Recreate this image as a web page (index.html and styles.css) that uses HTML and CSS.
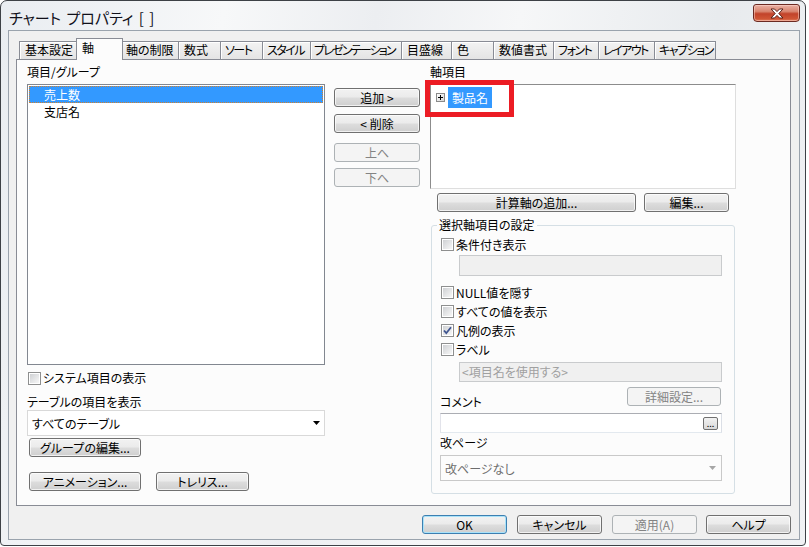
FILE: index.html
```html
<!DOCTYPE html>
<html>

<head>
    <title>チャート プロパティ</title>
    <link rel="stylesheet" href="styles.css">
</head>

<body>
    <div id="window">
        <div id="titlebar">
            <span class="title">チャート プロパティ [ ]</span>
            <span class="close">
                <svg width="14" height="11" viewBox="0 0 14 11">
                    <path d="M1 1 L4.5 1 L7 3.6 L9.5 1 L13 1 L8.8 5.5 L13 10 L9.5 10 L7 7.4 L4.5 10 L1 10 L5.2 5.5 Z" fill="#fff" stroke="#5a2118" stroke-width="1"/>
                </svg>
            </span>
        </div>
        <div id="client">
            <div id="tabs">
                <span class="tab w60">基本設定</span>
                <span class="tab active">軸</span>
                <span class="tab w59">軸の制限</span>
                <span class="tab w43">数式</span>
                <span class="tab kana w43">ソート</span>
                <span class="tab kana w49">スタイル</span>
                <span class="tab kana w92">プレゼンテーション</span>
                <span class="tab w51">目盛線</span>
                <span class="tab w43">色</span>
                <span class="tab w61">数値書式</span>
                <span class="tab kana w46">フォント</span>
                <span class="tab kana w57">レイアウト</span>
                <span class="tab kana w62">キャプション</span>
            </div>
            <div id="panel">
                <div class="col left">
                    <div class="label">項目/グループ</div>
                    <div class="listbox">
                        <div class="item selected">売上数</div>
                        <div class="item">支店名</div>
                    </div>
                    <div class="check"><span class="cb"></span><span class="cb-text">システム項目の表示</span></div>
                    <div class="label2">テーブルの項目を表示</div>
                    <div class="combo">
                        <span>すべてのテーブル</span>
                        <svg width="7" height="4" viewBox="0 0 7 4"><path d="M0 0 H7 L3.5 4 Z" fill="#000"/></svg>
                    </div>
                    <button class="btn group-edit">グループの編集...</button>
                    <div class="btnrow">
                        <button class="btn anim">アニメーション...</button>
                        <button class="btn trellis">トレリス...</button>
                    </div>
                </div>

                <div class="col middle">
                    <button class="btn">追加 &gt;</button>
                    <button class="btn del">&lt; 削除</button>
                    <button class="btn up" disabled>上へ</button>
                    <button class="btn down" disabled>下へ</button>
                </div>

                <div class="col right">
                    <div class="label">軸項目</div>
                    <div class="tree">
                        <div class="node">
                            <span class="plus">
                                <svg width="7" height="7" viewBox="0 0 7 7"><path d="M1 3.5 H6 M3.5 1 V6" stroke="#000" stroke-width="1"/></svg>
                            </span>
                            <span class="node-label">製品名</span>
                        </div>
                    </div>
                    <div class="highlight"></div>
                    <div class="axis-btns">
                        <button class="btn calc">計算軸の追加...</button>
                        <button class="btn edit">編集...</button>
                    </div>
                    <fieldset class="group">
                        <legend>選択軸項目の設定</legend>
                        <div class="group-body">
                            <div class="check row"><span class="cb"></span><span class="cb-text">条件付き表示</span></div>
                            <div class="field"></div>
                            <div class="check row first"><span class="cb"></span><span class="cb-text">NULL値を隠す</span></div>
                            <div class="check row"><span class="cb"></span><span class="cb-text">すべての値を表示</span></div>
                            <div class="check row">
                                <span class="cb">
                                    <svg width="9" height="9" viewBox="0 0 9 9"><path d="M1 4.5 L3.3 7.2 L8 1.2" fill="none" stroke="#3f5590" stroke-width="1.8"/></svg>
                                </span>
                                <span class="cb-text">凡例の表示</span>
                            </div>
                            <div class="check row"><span class="cb"></span><span class="cb-text">ラベル</span></div>
                            <div class="field name-field">&lt;項目名を使用する&gt;</div>
                            <div class="comment-row">
                                <span class="comment-label">コメント</span>
                                <button class="btn detail" disabled>詳細設定...</button>
                            </div>
                            <div class="comment-input"><span class="dots">...</span></div>
                            <div class="pb-label">改ページ</div>
                            <div class="combo disabled">
                                <span>改ページなし</span>
                                <svg width="7" height="4" viewBox="0 0 7 4"><path d="M0 0 H7 L3.5 4 Z" fill="#a6a6a6"/></svg>
                            </div>
                        </div>
                    </fieldset>
                </div>
            </div>
            <div id="footer">
                <button class="btn default">OK</button>
                <button class="btn">キャンセル</button>
                <button class="btn" disabled>適用(A)</button>
                <button class="btn help">ヘルプ</button>
            </div>
        </div>
    </div>
</body>

</html>
```

FILE: styles.css
```css
* {
    box-sizing: border-box;
}

body {
    margin: 0;
    width: 809px;
    height: 547px;
    overflow: hidden;
    background: #fff;
    font-family: "Noto Sans CJK JP", sans-serif;
    font-size: 12px;
    color: #000;
    font-feature-settings: "palt";
}

#window {
    width: 806px;
    height: 546px;
    border: 1px solid #3d4146;
    border-radius: 7px 7px 4px 4px;
    padding: 0 5px 5px 7px;
    display: flex;
    flex-direction: column;
    background: linear-gradient(100deg, #e9edf1 0%, #f7f8f9 25%, #eceef1 42%, #f6f7f8 58%, #e8ebee 80%, #f0f2f4 100%);
}

#titlebar {
    height: 29px;
    display: flex;
    justify-content: space-between;
    align-items: flex-start;
}

.title {
    font-size: 15px;
    line-height: 20px;
    margin-top: 7px;
    padding-left: 1px;
    word-spacing: 2px;
    color: #10101a;
}

.close {
    width: 47px;
    height: 18px;
    margin-top: 3px;
    border: 1px solid #6b2a22;
    border-radius: 3px 3px 4px 4px;
    background: linear-gradient(#eab0a4 0%, #d98670 40%, #c2432a 55%, #cf5535 85%, #e07a5a 100%);
    box-shadow: inset 0 0 0 1px rgba(255, 220, 210, 0.5);
    display: flex;
    align-items: center;
    justify-content: center;
}

#client {
    flex: 1;
    border: 1px solid #9aa3ad;
    background: #f0f0f0;
    padding: 7px 0 0 7px;
    display: flex;
    flex-direction: column;
}

#tabs {
    display: flex;
    align-items: flex-end;
    height: 21px;
    padding-left: 3px;
    position: relative;
    z-index: 1;
}

.tab {
    flex: none;
    height: 18px;
    line-height: 16px;
    padding: 0 5px;
    margin-left: -1px;
    border: 1px solid #898c95;
    border-bottom: none;
    background: linear-gradient(#f3f3f3, #e4e4e4);
    box-shadow: inset 1px 1px 0 #fff;
    white-space: nowrap;
    overflow: hidden;
}

.tab:first-child {
    margin-left: 0;
}

.tab.kana {
    letter-spacing: -1.5px;
    padding: 0 3px 0 4px;
}

.w43 { width: 43px; }
.w46 { width: 46px; }
.w49 { width: 49px; }
.w51 { width: 51px; }
.w57 { width: 57px; }
.w59 { width: 59px; }
.w60 { width: 60px; }
.w61 { width: 61px; }
.w62 { width: 62px; }
.w92 { width: 92px; }

.tab.kana.w92 {
    letter-spacing: -1.8px;
    padding-left: 3px;
}

.tab.active {
    width: 47px;
    height: 22px;
    line-height: 18px;
    margin: 0 -2px -1px -3px;
    background: #fcfcfc;
    box-shadow: none;
    position: relative;
    z-index: 2;
}

#panel {
    width: 775px;
    height: 447px;
    border: 1px solid #898c95;
    background: #fcfcfc;
    display: flex;
    padding-left: 10px;
}

.col {
    display: flex;
    flex-direction: column;
    align-items: flex-start;
}

.label {
    height: 24px;
    padding-top: 5px;
    line-height: 14px;
}

.left {
    width: 298px;
    margin-right: 9px;
}

.listbox {
    width: 298px;
    height: 281px;
    border: 1px solid #828790;
    background: #fff;
    padding: 1px;
}

.item {
    height: 17px;
    line-height: 17px;
    padding-left: 15px;
}

.item.selected {
    background: #3399ff;
    color: #fff;
    border: 1px dotted #d0802e;
    line-height: 15px;
    padding-left: 14px;
}

.check {
    display: flex;
    align-items: center;
    height: 14px;
    margin-top: 6px;
    padding-left: 1px;
}

.cb {
    width: 13px;
    height: 13px;
    border: 1px solid #8e8f8f;
    padding: 1px;
    background: linear-gradient(135deg, #cfd1d4, #f7f7f7) content-box, #f6f6f6;
    box-shadow: inset 0 0 0 1px #fff;
    display: flex;
    align-items: center;
    justify-content: center;
}

.cb-text {
    margin-left: 2px;
    line-height: 14px;
}

.label2 {
    margin-top: 10px;
    line-height: 14px;
}

.combo {
    width: 298px;
    height: 26px;
    margin-top: 1px;
    border: 1px solid #d9d9d9;
    background: #fff;
    display: flex;
    align-items: center;
    justify-content: space-between;
    padding: 0 4px 0 4px;
}

.btn {
    height: 19px;
    padding: 0;
    border: 1px solid #707070;
    border-radius: 3px;
    background: linear-gradient(#f2f2f2 0%, #ebebeb 48%, #dddddd 52%, #cfcfcf 100%);
    box-shadow: inset 0 0 0 1px rgba(255, 255, 255, 0.7);
    font-family: inherit;
    font-size: 12px;
    font-feature-settings: "palt";
    line-height: 16px;
    color: #000;
    text-align: center;
}

.btn:disabled {
    border-color: #adb2b5;
    background: #f4f4f4;
    box-shadow: none;
    color: #838383;
}

.group-edit {
    width: 112px;
    margin: 2px 0 0 2px;
}

.btnrow {
    display: flex;
    margin: 15px 0 0 2px;
}

.anim {
    width: 112px;
}

.trellis {
    width: 93px;
    margin-left: 15px;
}

.middle {
    width: 86px;
    margin-right: 10px;
    padding-top: 28px;
}

.middle .btn {
    width: 86px;
}

.middle .del {
    margin-top: 7px;
}

.middle .up {
    margin-top: 10px;
}

.middle .down {
    margin-top: 6px;
}

.right {
    width: 306px;
    position: relative;
}

.tree {
    width: 306px;
    height: 105px;
    border: 1px solid;
    border-color: #8c8c8c #dedede #dedede #8c8c8c;
    background: #fff;
    padding: 2px 0 0 5px;
}

.node {
    display: flex;
    align-items: center;
    height: 21px;
}

.plus {
    width: 9px;
    height: 9px;
    border: 1px solid #8a8a8a;
    background: linear-gradient(135deg, #ffffff, #d4d4d4);
    display: flex;
}

.node-label {
    margin-left: 3px;
    padding: 0 4px;
    background: #3399ff;
    color: #fff;
    line-height: 21px;
}

.highlight {
    position: absolute;
    left: -5px;
    top: 20px;
    width: 89px;
    height: 37px;
    border: 5px solid #ec1c24;
}

.axis-btns {
    display: flex;
    margin-top: 4px;
    padding-left: 7px;
}

.calc {
    width: 199px;
}

.edit {
    width: 85px;
    margin-left: 8px;
}

.group {
    margin: 6px 0 0 1px;
    width: 304px;
    min-width: 0;
    padding: 0;
    border: 1px solid #d5dfe5;
    border-radius: 3px;
}

.group legend {
    margin-left: 5px;
    padding: 0 2px;
    line-height: 14px;
}

.group-body {
    display: flex;
    flex-direction: column;
    padding: 3px 12px 12px 8px;
}

.check.row {
    height: 19px;
    margin-top: 0;
}

.check.first {
    margin-top: 7px;
}

.field {
    height: 21px;
    margin: 1px 0 0 19px;
    border: 1px solid #c9cbcd;
    background: #f0f0f0;
}

.name-field {
    height: 20px;
    margin-top: 3px;
    padding-left: 2px;
    line-height: 18px;
    color: #a0a0a0;
}

.comment-row {
    display: flex;
    justify-content: space-between;
    height: 26px;
    margin-top: 5px;
}

.comment-label {
    align-self: flex-end;
    margin-bottom: 4px;
    line-height: 14px;
}

.detail {
    width: 94px;
    margin-right: 1px;
}

.comment-input {
    height: 20px;
    border: 1px solid;
    border-color: #abadb3 #dbdfe6 #e3e9ef #e2e3ea;
    background: #fff;
    display: flex;
    justify-content: flex-end;
    align-items: center;
    padding-right: 3px;
}

.dots {
    width: 15px;
    height: 13px;
    border: 1px solid #707070;
    border-radius: 2px;
    background: linear-gradient(#f2f2f2, #d9d9d9);
    font-size: 9px;
    line-height: 12px;
    text-align: center;
}

.pb-label {
    margin-top: 3px;
    line-height: 14px;
}

.combo.disabled {
    width: auto;
    margin-top: 5px;
    border-color: #c9c9c9;
    background: #fcfcfc;
    color: #6d6d6d;
    padding-right: 5px;
}

#footer {
    display: flex;
    justify-content: flex-end;
    margin-top: 9px;
    padding-right: 8px;
}

#footer .btn {
    width: 85px;
    margin-left: 10px;
}

#footer .help {
    margin-left: 9px;
}

#footer .default {
    border-color: #3c7fb1;
    box-shadow: inset 0 0 0 1px #a9e2f9;
}
```
